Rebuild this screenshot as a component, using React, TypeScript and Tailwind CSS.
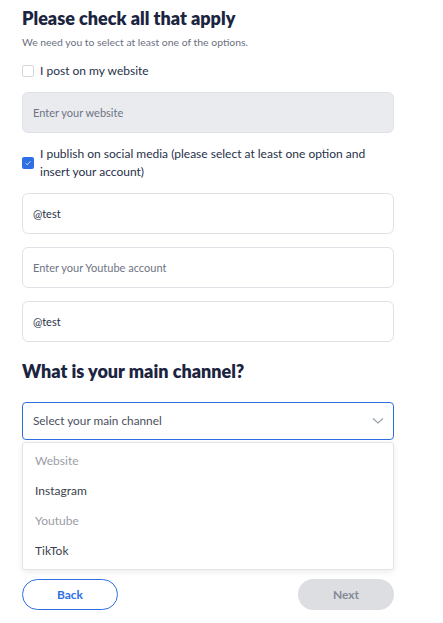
import { useState } from 'react';

const channels = [
  { label: 'Website', disabled: true },
  { label: 'Instagram', disabled: false },
  { label: 'Youtube', disabled: true },
  { label: 'TikTok', disabled: false },
];

export default function App() {
  const [website, setWebsite] = useState(false);
  const [social, setSocial] = useState(true);

  return (
    <div className="min-h-screen bg-white font-['Lato',sans-serif] text-[#283048]">
      <div className="w-[372px] ml-[22px] pt-[6px]">
        <h1 className="text-[18px] leading-[24px] font-extrabold text-[#1b2440]">
          Please check all that apply
        </h1>
        <p className="mt-[6px] text-[10.4px] leading-[12px] text-[#6b7080]">
          We need you to select at least one of the options.
        </p>

        <label className="mt-[16px] flex items-center gap-[6px] h-[14px]">
          <span
            onClick={() => setWebsite(!website)}
            className="w-[12px] h-[12px] rounded-[2px] border border-[#d4d7dd] bg-white"
          />
          <span className="text-[12px] leading-[14px]">I post on my website</span>
        </label>

        <input
          disabled
          placeholder="Enter your website"
          className="mt-[14px] w-full h-[41px] rounded-[6px] border border-[#dfe2e6] bg-[#e9ebee] px-[10px] text-[11px] placeholder:text-[#6e7384]"
        />

        <label className="mt-[12px] flex items-center gap-[6px]">
          <span
            onClick={() => setSocial(!social)}
            className="shrink-0 w-[12px] h-[12px] rounded-[2px] bg-[#2f6fe4] flex items-center justify-center"
          >
            {social && (
              <svg width="8" height="8" viewBox="0 0 8 8" fill="none">
                <path d="M1.5 4.2 L3.2 5.8 L6.5 2.2" stroke="#dbe6fb" strokeWidth="0.9" />
              </svg>
            )}
          </span>
          <span className="text-[12px] leading-[18px]">
            I publish on social media (please select at least one option and insert your account)
          </span>
        </label>

        <div className="mt-[12px] flex flex-col gap-[13px]">
          <input
            defaultValue="@test"
            className="w-full h-[41px] rounded-[6px] border border-[#dfe2e6] bg-white px-[10px] text-[11px] text-[#283048] outline-none"
          />
          <input
            placeholder="Enter your Youtube account"
            className="w-full h-[41px] rounded-[6px] border border-[#dfe2e6] bg-white px-[10px] text-[11px] placeholder:text-[#6e7384] outline-none"
          />
          <input
            defaultValue="@test"
            className="w-full h-[41px] rounded-[6px] border border-[#dfe2e6] bg-white px-[10px] text-[11px] text-[#283048] outline-none"
          />
        </div>

        <h2 className="mt-[18px] text-[18px] leading-[22px] font-extrabold text-[#1b2440]">
          What is your main channel?
        </h2>

        <div className="relative mt-[20px]">
          <button className="w-full h-[38px] rounded-[4px] border border-[#2f6fe4] bg-white px-[10px] flex items-center justify-between text-[11.8px] text-[#4a4f60]">
            <span>Select your main channel</span>
            <svg width="12" height="8" viewBox="0 0 12 8" fill="none" className="mr-[-1px]">
              <path d="M1 1.5 L6 6 L11 1.5" stroke="#9aa0ad" strokeWidth="1.2" />
            </svg>
          </button>
          <ul className="mt-[2px] w-full rounded-[3px] border border-[#e2e4e8] bg-white shadow-[0_2px_6px_rgba(0,0,0,0.08)] py-[3px]">
            {channels.map((c) => (
              <li
                key={c.label}
                className={`h-[30px] flex items-center px-[12px] text-[12px] ${
                  c.disabled ? 'text-[#9a9da6]' : 'text-[#3a3f4c]'
                }`}
              >
                {c.label}
              </li>
            ))}
          </ul>
        </div>

        <div className="mt-[9px] flex justify-between">
          <button className="w-[96px] h-[31px] rounded-full border border-[#2f6fe4] text-[#2f6fe4] text-[12px] font-bold">
            Back
          </button>
          <button disabled className="w-[96px] h-[31px] rounded-full bg-[#dcdee2] text-[#858a96] text-[12px] font-bold">
            Next
          </button>
        </div>
      </div>
    </div>
  );
}
